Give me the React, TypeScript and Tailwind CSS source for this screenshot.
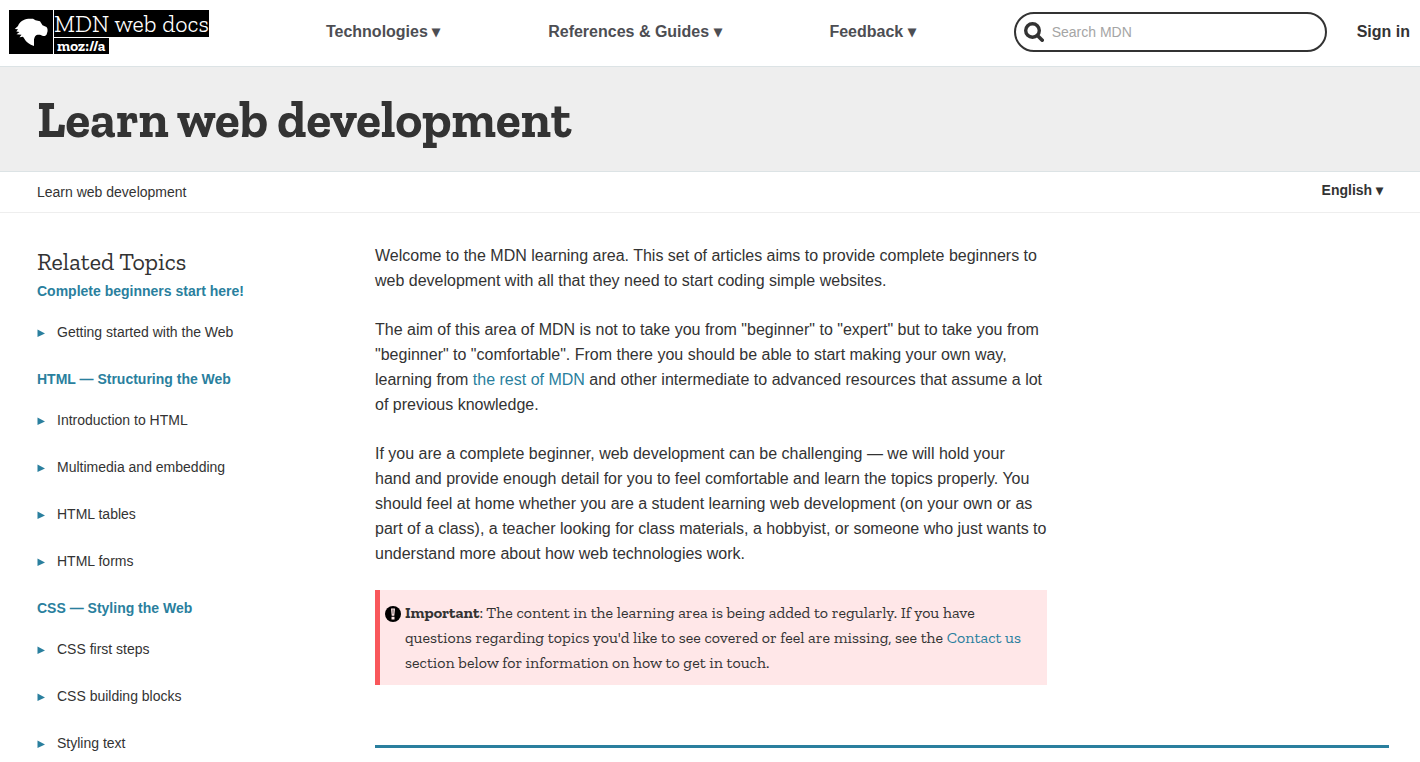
import React from "react";

const slab = "font-['Zilla_Slab','DejaVu_Serif_Condensed','DejaVu_Serif',serif]";

const menus = ["Technologies", "References & Guides", "Feedback"];

const topics = [
  { title: "Complete beginners start here!", items: ["Getting started with the Web"] },
  {
    title: "HTML — Structuring the Web",
    items: ["Introduction to HTML", "Multimedia and embedding", "HTML tables", "HTML forms"],
  },
  {
    title: "CSS — Styling the Web",
    items: ["CSS first steps", "CSS building blocks", "Styling text"],
  },
];

function Logo() {
  return (
    <a href="#" aria-label="MDN web docs" className="flex gap-px text-white">
      <svg viewBox="0 0 44 44" className="size-11 bg-black" aria-hidden="true">
        <path
          fill="#fff"
          d="M5.800 19 9 16C10.500 12 14.500 9.200 19.300 8.700H24L26.500 10.200 31 11.200 33.500 15.200 37.500 17C38.500 18 38.800 20 38.500 21.500L37.500 24.800C36.500 26 35.500 26.200 34 26L31 24.800H28.500C26.500 25.300 25.500 27 25 29.500V36C20.500 34.700 17 32 15.200 28.500L14 26.800 10.500 27.300 12.500 24.800 7.500 24.300 10.500 22 7.300 21.500 9 19.300Z"
        />
      </svg>
      <span className="flex flex-col items-start gap-px">
        <span className={`${slab} h-[27px] w-[155px] bg-black text-2xl leading-[27px] font-light whitespace-nowrap`}>
          MDN web docs
        </span>
        <span className={`${slab} h-4 w-[55px] bg-black px-[3px] text-[15px] leading-4 font-bold`}>moz://a</span>
      </span>
    </a>
  );
}

export default function App() {
  return (
    <div className="bg-white font-['Liberation_Sans',Arial,sans-serif] text-[#333]">
      <header className="flex items-start border-b border-[#dce3e5] pt-2.5 pr-2.5 pb-3 pl-[9px]">
        <Logo />
        <nav className="mr-11 ml-[63px] flex flex-1 justify-around pt-2.5 font-bold text-[#4d4e53]">
          {menus.map((name) => (
            <button key={name} type="button" className="leading-6">
              {name} ▾
            </button>
          ))}
        </nav>
        <form className="mt-0.5 flex h-10 w-[313px] items-center rounded-full border-2 border-[#333] pl-2" role="search">
          <svg viewBox="0 0 20 20" className="size-5" fill="none" stroke="#333" aria-hidden="true">
            <circle cx="8.500" cy="8.500" r="6.800" strokeWidth="3.400" />
            <path d="M13.500 13.500 18.200 18.200" strokeWidth="3.600" strokeLinecap="round" />
          </svg>
          <input
            type="search"
            aria-label="Search MDN"
            placeholder="Search MDN"
            className="ml-2 min-w-0 flex-1 bg-transparent text-sm outline-none placeholder:text-[#a5a5a5]"
          />
        </form>
        <a href="#" className="mt-2.5 ml-[30px] leading-6 font-bold">
          Sign in
        </a>
      </header>

      <div className="border-b border-[#dce3e5] bg-[#eee] px-[37px] pt-[23px] pb-[21px]">
        <h1 className={`${slab} text-[51px] leading-[60px] font-bold`}>Learn web development</h1>
      </div>

      <div className="flex h-[41px] items-center justify-between border-b border-[#eee] px-[37px] text-sm">
        <a href="#">Learn web development</a>
        <button type="button" className="pb-1 font-bold">
          English ▾
        </button>
      </div>

      <div className="flex pr-[31px] pl-[37px]">
        <aside className="w-[338px] shrink-0 pt-8 text-sm leading-[21px]">
          <h2 className={`${slab} pb-0.5 text-2xl leading-[34px]`}>Related Topics</h2>
          {topics.map((topic, i) => (
            <section key={topic.title} className={i > 0 ? "mt-[26px]" : ""}>
              <h3>
                <a href="#" className="font-bold text-[#2a7f9e]">
                  {topic.title}
                </a>
              </h3>
              <ul className="mt-5 flex flex-col gap-[26px]">
                {topic.items.map((item) => (
                  <li key={item} className="flex items-center">
                    <svg viewBox="0 0 8 8" className="mr-3 size-2" fill="#2a7f9e" aria-hidden="true">
                      <path d="M0.500 0.500 8 4.500 0.500 8Z" />
                    </svg>
                    <a href="#">{item}</a>
                  </li>
                ))}
              </ul>
            </section>
          ))}
        </aside>

        <main className="min-w-0 flex-1 pt-[30px]">
          <div className="flex max-w-[672px] flex-col gap-6 leading-[25px]">
            <p>
              Welcome to the MDN learning area. This set of articles aims to provide complete beginners to web
              development with all that they need to start coding simple websites.
            </p>
            <p>
              The aim of this area of MDN is not to take you from "beginner" to "expert" but to take you from
              "beginner" to "comfortable". From there you should be able to start making your own way, learning from{" "}
              <a href="#" className="text-[#2a7f9e]">
                the rest of MDN
              </a>{" "}
              and other intermediate to advanced resources that assume a lot of previous knowledge.
            </p>
            <p>
              If you are a complete beginner, web development can be challenging — we will hold your hand{"\u00a0"}and
              provide enough detail for you to feel comfortable and learn the topics properly. You should feel at
              home whether you are a student learning web development (on your own or as part of a class), a teacher
              looking for class materials, a hobbyist, or someone who just wants to understand more about how web
              technologies work.
            </p>
            <div className="flex gap-1 border-l-[5px] border-[#f9575b] bg-[#ffe7e8] py-2.5 pr-5 pl-[5px]">
              <svg viewBox="0 0 16 16" className="mt-1.5 size-4 shrink-0" aria-hidden="true">
                <circle cx="8" cy="8" r="8" />
                <path fill="#ffe7e8" d="M6 2.500H10L9.300 9.800H6.700ZM6.500 10.800H9.500V13.500H6.500Z" />
                <path d="M7.600 3.500H8.400L8.200 8.300H7.800Z" />
              </svg>
              <p className={`${slab} text-base leading-[25px]`}>
                <strong>Important</strong>: The content in the learning area is being added to regularly. If you have
                questions regarding topics you'd like to see covered or feel are missing, see the{" "}
                <a href="#" className="text-[#2a7f9e]">
                  Contact us
                </a>{" "}
                section below for information on how to get in touch.
              </p>
            </div>
          </div>
          <hr className="mt-[60px] border-t-[3px] border-[#2a7f9e]" />
        </main>
      </div>
    </div>
  );
}
